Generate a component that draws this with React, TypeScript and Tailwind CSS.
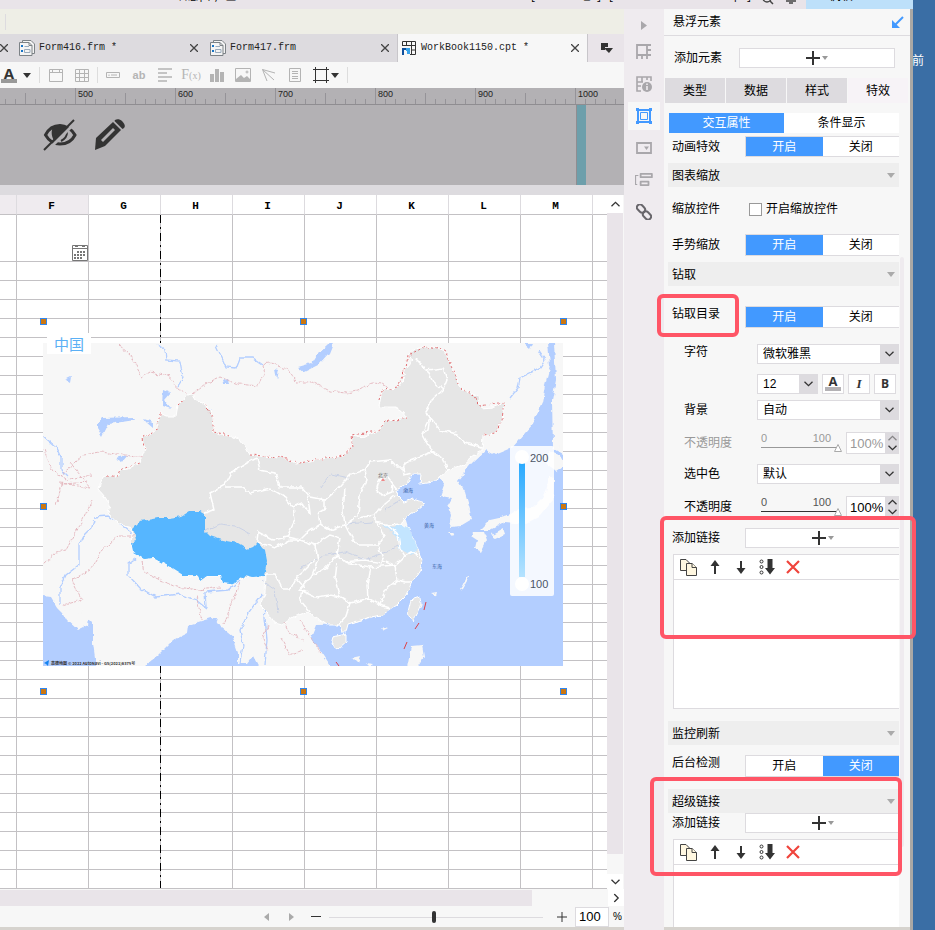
import { useId, type ReactNode } from 'react';
import clsx from 'clsx';

const columns = ['', 'F', 'G', 'H', 'I', 'J', 'K', 'L', 'M', ''];
const rows = Array.from({ length: 34 }, (_, i) => i);

const chinaOutline =
  'M99 490L100 484L103 477L107 476L117 476L120 470L128 469L140 462L142 457L145 450L143 436L152 433L157 430L160 413L166 416L176 416L178 405L184 399L187 395L192 394L195 399L203 404L210 409L213 418L213 432L220 434L230 435L240 440L246 448L250 455L258 456L280 457L296 463L310 462L326 458L343 456L353 447L351 435L363 437L378 431L385 422L393 420L407 418L403 412L395 407L379 407L382 390L397 388L402 382L406 368L413 360L408 355L415 349L425 347L433 347L445 352L450 363L457 380L460 389L470 392L478 398L482 408L492 407L504 402L502 420L495 433L483 435L482 450L472 457L463 465L448 470L440 477L433 482L420 484L421 474L413 474L408 482L395 490L397 495L404 502L413 499L425 503L417 510L405 518L402 524L408 528L415 542L418 550L422 560L420 572L412 582L405 597L397 605L382 615L367 618L348 624L346 632L342 632L340 625L327 625L317 618L307 612L293 617L282 625L275 623L268 613L260 605L265 593L266 575L264 576L247 576L238 580L230 584L222 583L220 576L207 576L190 576L170 567L153 558L145 559L133 552L131 543L133 528L125 526L117 523L108 513L110 505L105 497Z';

const tibet =
  'M133 528L140 521L147 520L158 518L169 518L182 516L190 511L200 511L205 514L205 531L210 536L222 540L238 543L248 549L253 547L258 542L265 550L267 561L264 576L253 577L245 575L238 580L230 584L222 583L220 576L207 576L200 581L197 575L183 575L170 567L153 558L145 559L133 552L131 543L136 541Z';

const eastSea =
  'M548 343L550 365L545 385L542 402L532 425L512 448L495 455L486 450L472 463L458 481L465 492L470 510L472 520L462 526L450 527L452 515L448 505L452 498L441 496L445 485L440 478L420 484L421 474L413 474L408 482L395 490L397 495L404 502L425 503L417 510L405 518L408 528L418 550L422 560L420 572L412 582L405 597L382 615L348 624L317 625L311 640L320 650L332 672H570V458L553 448L552 400L556 380L554 343Z';

const provinces = [
  'M257 458L247 463L232 472L225 485L210 493L214 510L205 513',
  'M225 487L243 487L250 493L270 488L285 497L293 507L295 520L287 537L273 540L258 532L257 542',
  'M257 458L260 470L275 473L280 487L302 487L310 497L325 500L337 490L343 483L352 474L365 470L370 462L390 460L396 467L403 467L410 460L432 452L422 433L430 417L425 412L432 400L443 390L433 382L427 370L415 358',
  'M430 417L440 430L457 434L465 443L482 448M422 433L428 430L430 417M432 452L443 458L448 470',
  'M427 370L443 368L447 380L443 390',
  'M293 507L302 503L310 513L308 497M325 500L325 508L318 512L320 524L330 530L345 525',
  'M365 470L367 480L360 495L358 515L345 525L343 510L345 488',
  'M358 518L375 515L385 503L395 495M375 515L375 522L390 525L402 524',
  'M378 480L388 477L393 484L392 492L382 496L376 488ZM393 484L398 490',
  'M403 467L404 475L412 473M345 525L352 538L358 545L378 545L384 536L376 522',
  'M386 525L398 535L400 548L405 556L395 565L383 560L378 545',
  'M405 556L412 552L418 556M300 540L315 545L330 535L340 538L337 555L345 562L365 560L383 563',
  'M337 555L325 568L312 575L300 590L315 597L330 595L340 597L335 580L337 562',
  'M340 597L350 603L362 600L368 598L367 585L370 567L345 562',
  'M368 598L380 605L385 590L397 580L395 565L370 567M397 580L405 582L412 582',
  'M380 605L390 608M350 603L346 616L338 625M302 590L300 600L310 612',
  'M258 542L275 548L290 540L300 540M266 575L275 575L283 590L290 590L296 578L305 588M315 545L318 560L312 575',
  'M287 537L300 540L310 530L320 524M315 560L303 572L296 578',
];

const rivers = [
  'M43 436L56 447L61 458L61 470L68 477',
  'M157 344L165 350L166 360L180 361L183 378L178 386',
  'M216 345L222 358L226 367L236 368L240 358L253 358L262 364',
  'M94 520L92 527L84 535L79 545L79 565L66 575L60 588L60 605',
  'M94 517L108 516L120 524L134 535',
  'M136 558L128 564L128 575L140 588L156 597L180 594L196 600L206 608M206 592L228 590L240 580M205 592L206 607',
  'M262 594L249 612L240 630L243 645L240 663M264 606L267 640L265 665',
  'M178 405L190 410L205 416L210 408',
  'M510 398L518 388L520 378L540 368L545 360L538 350',
];

const redBorders = [
  'M118 344L130 355L142 377L150 372L168 376L178 388L187 394M192 394L205 384L220 377L238 384L258 386L264 374L262 366L268 362L288 370L296 382L312 382L330 391L345 393L358 391L372 383L382 384L392 390',
  'M60 476L84 455L100 452L125 455L142 458M44 450L52 470L66 480L92 474M60 483L90 488L70 462M56 505L62 484L88 482',
  'M92 500L82 522L76 532L66 550L56 552L43 564M134 536L118 536L100 552L90 570L72 580L82 600L62 606',
  'M142 562L144 572L160 580L176 587L200 590L220 587M240 582L232 602L224 625M196 596L202 620',
  'M268 625L262 638L268 650M284 622L290 634L304 640M281 638L290 655L303 650M300 620L306 630L322 655',
];

const brightBorders = [
  'M107 476L117 476L120 470L140 462M144 450L143 436L157 430L160 413M178 405L184 399M205 404L213 418V432L230 435M250 455L280 457L300 463L326 458L343 456L353 447L351 435L378 431L385 422L407 418M379 400L382 390L397 388L406 368L408 355L425 347L445 350L450 363L458 384M460 389L470 392L480 406L504 402L502 420L495 433L483 435',
];

function Icon({ size = 16, className, children }: { size?: number; className?: string; children: ReactNode }) {
  return (
    <svg width={size} height={size} viewBox="0 0 16 16" fill="none" stroke="currentColor" className={clsx('shrink-0', className)}>
      {children}
    </svg>
  );
}

function Caret({ className }: { className?: string }) {
  return (
    <svg width="8" height="5" viewBox="0 0 8 5" fill="currentColor" className={clsx('shrink-0', className)}>
      <path d="M0 0H8L4 5Z" />
    </svg>
  );
}

function Chevron({ className }: { className?: string }) {
  return (
    <svg width="9" height="6" viewBox="0 0 9 6" fill="none" stroke="#333" strokeWidth="1.3" className={clsx('shrink-0', className)}>
      <path d="M.5 .7L4.500 4.700L8.500 .7" />
    </svg>
  );
}

function CloseIcon() {
  return (
    <svg width="8" height="8" viewBox="0 0 8 8" stroke="#444" strokeWidth="1.3">
      <path d="M0 0L8 8M8 0L0 8" />
    </svg>
  );
}

function FormIcon() {
  return (
    <Icon>
      <path d="M3.500 2.500V.5H12L15.500 4V13.500H13" fill="#f4f4f4" stroke="#7c8286" />
      <path d="M.5 2.500H10L13 5.500V15.500H.5Z" fill="#f4f4f4" stroke="#7c8286" />
      <path d="M2 5H4V7H2ZM2 10H4V12H2Z" fill="#1673c4" stroke="none" />
      <path d="M5.500 6.500H10M5.500 9.500H11V12.500H5.500Z" stroke="#9ab" />
      <path d="M10 2.500V5.500H13" stroke="#7c8286" />
    </Icon>
  );
}

function BookIcon() {
  return (
    <Icon>
      <path d="M1.500 6V1.500H14.500V14.500H9M1.500 5.500H14.500M5.500 1.500V6M10.500 1.500V14.500M10.500 10H14.500" stroke="#333" />
      <path d="M1 8H5V10H3V15H1Z" fill="#0f4f9c" stroke="none" />
      <path d="M5 8H9V14H6V11H5Z" fill="#38a3ea" stroke="none" />
    </Icon>
  );
}

function Toggle({ label, active = 0 }: { label: string; active?: number }) {
  return (
    <div role="group" aria-label={label} className="flex h-full flex-1 border border-r-0 border-[#dddbdf] bg-white">
      {['开启', '关闭'].map((text, i) => (
        <button key={text} aria-pressed={i === active} className={clsx('flex flex-1 items-center justify-center', i === active && 'bg-[#4299ff] text-white')}>
          {text}
        </button>
      ))}
    </div>
  );
}

function SettingRow({ label, children, className, indent, top }: { label: string; children: ReactNode; className?: string; indent?: boolean; top?: boolean }) {
  return (
    <div className={clsx('flex pr-px', top ? 'items-start' : 'items-center', className)}>
      <span className={clsx('shrink-0 leading-4', indent ? 'w-[93px] pl-5' : 'w-[81px] pl-2')}>{label}</span>
      {children}
    </div>
  );
}

function SectionHeader({ title, className }: { title: string; className?: string }) {
  return (
    <button className={clsx('ml-1 mr-px flex h-6 items-center justify-between bg-[#eeeeee] px-1 pt-px', className)}>
      {title}
      <Caret className="text-[#aaa]" />
    </button>
  );
}

function SelectBox({ label, value, className }: { label: string; value: string; className?: string }) {
  return (
    <div className={clsx('relative h-5 border border-[#dddbdf] bg-white', className)}>
      <select aria-label={label} className="block h-full w-full appearance-none pl-[5px] outline-none">
        <option>{value}</option>
      </select>
      <span className="pointer-events-none absolute inset-y-0 right-0 flex w-[18px] items-center justify-center bg-[#dddbdf]">
        <Chevron />
      </span>
    </div>
  );
}

function Opacity({ disabled, className }: { disabled?: boolean; className?: string }) {
  const id = useId();
  return (
    <SettingRow label="不透明度" indent className={clsx('h-[22px]', disabled && 'text-[#999]', className)}>
      <div className={clsx('relative h-[22px] w-[89px] pl-1', disabled ? 'text-[#999]' : 'text-[#555]')}>
        <label htmlFor={id} className="flex w-[70px] justify-between text-[11px] leading-3">
          <span>0</span>
          <span>100</span>
        </label>
        <svg width="84" height="10" viewBox="0 0 84 10" className="-mt-px">
          <path d="M0 4.500H75" stroke={disabled ? '#999' : '#333'} />
          <path d="M77 1.500L80.500 8.500H73.500Z" fill="#fff" stroke="#aaa" />
        </svg>
        <input id={id} type="range" defaultValue={100} disabled={disabled} className="absolute inset-0 w-full opacity-0" />
      </div>
      <input aria-label="不透明度" defaultValue="100%" disabled={disabled} className="h-[22px] w-10 border border-[#dddbdf] bg-white pl-[3px] text-[13px] outline-none" />
      <div className="flex h-[22px] w-[13px] flex-col items-center justify-between bg-[#dddbdf] py-[3px]">
        <Chevron className={clsx('rotate-180', disabled && 'opacity-50')} />
        <Chevron />
      </div>
    </SettingRow>
  );
}

function AddButton({ label, className }: { label: string; className?: string }) {
  return (
    <button aria-label={label} className={clsx('flex h-5 flex-1 items-center justify-center gap-[2px] border border-[#dddbdf] bg-white', className)}>
      <svg width="14" height="14" viewBox="0 0 14 14" stroke="#333" strokeWidth="2">
        <path d="M7 0V14M0 7H14" />
      </svg>
      <svg width="6" height="4" viewBox="0 0 6 4" fill="#999">
        <path d="M0 0H6L3 4Z" />
      </svg>
    </button>
  );
}

function LinkList({ className }: { className?: string }) {
  return (
    <div className={clsx('ml-[9px] mr-px border border-r-0 border-[#dddbdf] bg-white', className)}>
      <div className="flex h-[25px] items-center gap-[10px] border-b border-[#dddbdf] pl-[6px] text-[#333]">
        <button aria-label="复制">
          <svg width="17" height="17" viewBox="0 0 17 17" fill="#fff7e0" stroke="#444">
            <path d="M.5 .5H6L9.500 4V11.500H.5Z" />
            <path d="M6.500 4.500H12L16.500 8.500V16.500H6.500Z" />
            <path d="M12 4.500V8.500H16.500" />
          </svg>
        </button>
        <button aria-label="上移">
          <Icon>
            <path d="M8 15V5" strokeWidth="2" />
            <path d="M8 1L12.500 7H3.500Z" fill="currentColor" stroke="none" />
          </Icon>
        </button>
        <button aria-label="下移">
          <Icon>
            <path d="M8 2V12" strokeWidth="2" />
            <path d="M8 15L12.500 9H3.500Z" fill="currentColor" stroke="none" />
          </Icon>
        </button>
        <button aria-label="排序">
          <Icon>
            <circle cx="2.500" cy="2.500" r="1.500" />
            <circle cx="2.500" cy="8" r="1.500" />
            <circle cx="2.500" cy="13.500" r="1.500" />
            <path d="M8.500 0H13.500V9H16L11 15.500L6 9H8.500Z" fill="currentColor" stroke="none" />
          </Icon>
        </button>
        <button aria-label="删除">
          <Icon className="text-[#f0443c]">
            <path d="M2 2L14 14M14 2L2 14" strokeWidth="2.200" />
          </Icon>
        </button>
      </div>
    </div>
  );
}

function ChinaMap() {
  return (
    <svg viewBox="43 343 520 323" className="block h-full w-full" preserveAspectRatio="none">
      <defs>
        <filter id="coast" filterUnits="userSpaceOnUse" x="38" y="338" width="530" height="333">
          <feTurbulence type="fractalNoise" baseFrequency="0.15" numOctaves="2" seed="4" />
          <feDisplacementMap in="SourceGraphic" scale="5" xChannelSelector="R" yChannelSelector="G" />
        </filter>
        <linearGradient id="heat" x1="0" y1="0" x2="0" y2="1">
          <stop offset="0" stopColor="#29aaff" />
          <stop offset="1" stopColor="#b5e3ff" />
        </linearGradient>
      </defs>
      <rect x="43" y="343" width="520" height="323" fill="#f7f7f7" />
      <g filter="url(#coast)">
        <g fill="#b3ceff">
          <path d={eastSea} />
          <path d="M36 595L51 597L57 607L63 613L67 620L78 630L88 625L89 618L93 622L93 643L97 672H36Z" />
          <path d="M138 672L158 655L173 640L187 633L188 625L215 617L222 628L233 637L238 652V663H247L253 655L262 672Z" />
          <path d="M97 425L103 418L133 417L135 420L108 424L102 436L97 428ZM115 458L128 455L122 462ZM144 419L153 422V428L146 422ZM65 380L71 377L70 383ZM222 381L228 379L229 384L223 384ZM275 369L279 370L277 380ZM163 390L170 393L164 400L171 408L162 405Z" />
          <path d="M298 367L312 363L318 353L327 345L333 343L329 353L318 365L304 372ZM523 343H533L530 349Z" />
        </g>
        <path d="M300 620L310 638L320 650L335 672H270V620Z" fill="#f7f7f7" />
        <g fill="#f7f7f7">
          <path d="M62 611L80 607L84 612L72 616ZM558 343H570V370L560 372ZM558 420L570 405V460L558 445Z" />
          <path d="M473 532L484 532L487 540L481 552L475 548L477 540L471 536ZM480 530L490 520L508 516L520 508L533 507L545 495L550 475L554 478L553 500L540 516L525 524L505 522L490 530ZM492 534L503 528L505 534L494 539ZM549 450L560 455L566 465L556 472L546 464Z" />
          <path d="M411 646L422 645L424 657L417 668L407 668ZM381 627L388 629L384 631ZM352 658L361 656L358 664ZM366 663L374 664L370 667ZM431 593L437 592L436 596ZM449 533L454 533L452 536ZM459 590L463 585L466 579L471 574L467 581L463 588Z" />
        </g>
        <g fill="none" stroke="#b3ceff" strokeWidth="1.300">
          {rivers.map((d) => <path key={d} d={d} />)}
        </g>
        <path d={chinaOutline} fill="#e6e6e6" stroke="#fff" strokeWidth="1" />
        <path d="M420 597L421 604L413 622L408 613L411 600ZM333 637L346 634L346 642L338 649L331 644Z" fill="#e6e6e6" stroke="#fff" />
        <path d={tibet} fill="#57b6ff" />
        <path d="M383 525L393 527L402 524L408 528L415 542L418 550L411 555L398 548L400 542L392 532Z" fill="#c3e5ff" />
        <g fill="none" stroke="#c3cde6" strokeWidth="0.800">
          <path d="M205 531L220 524L235 526L250 534M320 488L330 474L350 478M300 568L325 555L345 552L365 560L385 553L400 545M345 524L372 522M385 510L400 500M262 580L275 590L278 612" />
        </g>
        <g fill="none" stroke="#fff" strokeWidth="1.500">
          {provinces.map((d) => <path key={d} d={d} />)}
        </g>
        <g fill="none" stroke="#e3b3bb" strokeWidth="0.900" strokeDasharray="3 1">
          {redBorders.map((d) => <path key={d} d={d} />)}
        </g>
        <g fill="none" stroke="#dc5b60" strokeWidth="0.900" strokeDasharray="2 2.500">
          {brightBorders.map((d) => <path key={d} d={d} />)}
        </g>
      </g>
      <path d="M426 602L424 610M419 623L415 629M407 642L404 649M336 662L339 666" stroke="#dd4248" fill="none" />
      <path d="M383 478L385 481H381Z" fill="#e88" />
      <g fontFamily="'Noto Sans CJK SC', sans-serif" fontSize="5" fill="#31599f">
        <text x="378" y="477" fill="#666">北京</text>
        <text x="403" y="492">渤海</text>
        <text x="424" y="527">黄海</text>
        <text x="432" y="568">东海</text>
      </g>
      <rect x="510" y="446" width="44" height="150" rx="2" fill="#fff" fillOpacity="0.860" />
      <rect x="519" y="463" width="6" height="114" fill="url(#heat)" />
      <circle cx="522" cy="457" r="7" fill="#fff" />
      <circle cx="522" cy="584" r="7" fill="#fff" />
      <g fontFamily="'Liberation Sans', sans-serif" fontSize="11" fill="#4c5566">
        <text x="530" y="462">200</text>
        <text x="530" y="588">100</text>
      </g>
      <path d="M44 663L49 660L48 666L46 664Z" fill="#1683f0" />
      <text x="51" y="665" fontFamily="'Noto Sans CJK SC', sans-serif" fontSize="4" fontWeight="700" fill="#333">高德地图 © 2022 AutoNavi - GS(2021)6375号</text>
    </svg>
  );
}

function DocTab({ icon, title, active }: { icon: ReactNode; title: string; active?: boolean }) {
  return (
    <div className={clsx('flex w-[191px] shrink-0 items-center gap-1', active ? 'border-x border-[#c8c6ca] bg-[#f7f7f7] pl-[3px]' : 'pl-1')}>
      {icon}
      <button className="flex-1 text-left font-['Liberation_Mono'] text-[10px] text-[#222]">{title}</button>
      <button aria-label="关闭标签" className="mr-2"><CloseIcon /></button>
    </div>
  );
}

function ToolButton({ label, children }: { label: string; children: ReactNode }) {
  return (
    <button aria-label={label} className="flex w-[26px] shrink-0 items-center justify-center">{children}</button>
  );
}

function Editor() {
  return (
    <main className="flex min-w-0 flex-1 flex-col overflow-hidden bg-[#f7f7f7]">
      <div className="flex h-[25px] shrink-0 items-center bg-[#eeeee6] pl-[5px]"><span className="h-4 w-px bg-[#dddbdf]" /></div>
      <div className="flex h-7 shrink-0 bg-[#dddbdf]">
        <button aria-label="关闭标签" className="w-[15px] shrink-0 pr-2"><CloseIcon /></button>
        <DocTab icon={<FormIcon />} title="Form416.frm *" />
        <DocTab icon={<FormIcon />} title="Form417.frm" />
        <DocTab icon={<BookIcon />} title="WorkBook1150.cpt *" active />
        <button aria-label="标签列表" className="flex flex-1 items-center bg-[#e9e4e9] pl-3">
          <svg width="14" height="12" viewBox="0 0 14 12" fill="#333"><path d="M1 1H8V5H5V8H1ZM4 6H13L9 11Z" /></svg>
        </button>
      </div>
      <div className="flex h-[26px] shrink-0 items-stretch text-[#b4b4b4]">
        <button aria-label="字体颜色" className="flex w-[39px] items-center gap-[6px] pl-px text-[#333]">
          <span className="w-4 border-b-4 border-[#999] text-center font-['Open_Sans'] text-[15px] font-bold leading-3">A</span>
          <Caret />
        </button>
        <span className="my-[5px] mr-[3px] w-px bg-[#ddd]" />
        <ToolButton label="标题"><Icon><path d="M1.500 2.500H14.500V14.500H1.500ZM1.500 5.500H14.500M4.500 2.500V5.500M11.500 2.500V5.500" /></Icon></ToolButton>
        <ToolButton label="表格"><Icon><path d="M1.500 2.500H14.500V14.500H1.500ZM1.500 6.500H14.500M1.500 10.500H14.500M5.500 2.500V14.500M10.500 2.500V14.500" /></Icon></ToolButton>
        <span className="my-[5px] mx-[2px] w-px bg-[#ddd]" />
        <ToolButton label="控件"><Icon><path d="M1.500 5.500H14.500V10.500H1.500ZM4 7.500V9M6 8H12" /></Icon></ToolButton>
        <ToolButton label="文本"><span className="text-[11px] font-bold">ab</span></ToolButton>
        <ToolButton label="富文本"><Icon><path d="M1 2H15M1 6H10M1 10H15M1 14H10" strokeWidth="1.600" /></Icon></ToolButton>
        <ToolButton label="公式"><span className="whitespace-nowrap font-['Liberation_Serif'] text-sm">F<span className="text-[10px]">(x)</span></span></ToolButton>
        <ToolButton label="图表"><Icon><path d="M1 7H5V15H1ZM6 2H10V15H6ZM11 5H15V15H11Z" fill="currentColor" stroke="none" /></Icon></ToolButton>
        <ToolButton label="图片"><Icon><path d="M.5 1.500H15.500V14.500H.5Z" /><path d="M1 12L6 8L9 11L12 9L15 12V14H1Z" fill="currentColor" stroke="none" /><circle cx="12" cy="5" r="1" /></Icon></ToolButton>
        <ToolButton label="斜线"><Icon><path d="M1.500 2.500L14 6M1.500 2.500L13 13M1.500 2.500L6 14" /></Icon></ToolButton>
        <ToolButton label="子报表"><Icon><path d="M2.500 1.500H13.500V14.500H2.500ZM5 4.500H11M5 6.500H11M5 9.500H11M5 11.500H11" /></Icon></ToolButton>
        <button aria-label="悬浮元素" className="flex w-[39px] items-center gap-[2px] pl-[5px] text-[#333]">
          <Icon><path d="M2.500 0V16M13.500 0V16M0 2.500H16M0 13.500H16" /></Icon>
          <Caret />
        </button>
        <span className="my-[5px] w-px bg-[#ddd]" />
      </div>

      <div className="relative flex h-[17px] shrink-0 overflow-hidden border-b border-[#8f8d91] bg-[#b3b1b4] pl-[76px]">
        <svg width="100%" height="17" className="absolute left-0 top-0">
          <defs>
            <pattern id="ticks" x="75" width="100" height="17" patternUnits="userSpaceOnUse">
              <path d="M.5 0V16M50.500 5V16M10.500 11V16M20.500 11V16M30.500 11V16M40.500 11V16M60.500 11V16M70.500 11V16M80.500 11V16M90.500 11V16" stroke="#959398" />
            </pattern>
          </defs>
          <rect width="100%" height="17" fill="url(#ticks)" />
        </svg>
        {[500, 600, 700, 800, 900, 1000].map((n) => (
          <span key={n} className="w-[100px] shrink-0 pl-[2px] text-[9px] leading-[13px] text-[#222]">{n}</span>
        ))}
      </div>
      <div className="flex h-20 shrink-0 bg-[#b3b1b4]">
        <div className="flex w-[577px] gap-[18px] border-r border-[#8f8d91] pl-[43px] pt-[14px]">
          <button aria-label="隐藏" className="h-8 w-8">
            <svg width="34" height="32" viewBox="0 0 34 32" fill="none" stroke="#333" strokeWidth="3">
              <path d="M2.500 16C6 9 12 6.500 17 6.500S29 10 32 16C29 22 23 25 17 25S6 22 2.500 16Z" />
              <path d="M10 8C8 12 8 18 12 23L26 9C21 5 14 5 10 8Z" fill="#333" stroke="none" />
              <path d="M18 22C22 20 24 17 24 13" strokeWidth="2" />
              <path d="M5 31L33 3" stroke="#b3b1b4" strokeWidth="3" />
              <path d="M1 31L31 1" strokeWidth="2" />
            </svg>
          </button>
          <button aria-label="编辑" className="h-8 w-8">
            <svg width="34" height="32" viewBox="0 0 34 32">
              <path d="M3 19L20 3L28 11L12 27L2 31Z" fill="#333" />
              <path d="M22 1C24-.5 27 0 29 2S33 7 31 9L29.500 10L21.500 2Z" fill="#333" />
              <path d="M8 21L20 9L22 11L10 23Z" fill="#b3b1b4" />
            </svg>
          </button>
        </div>
        <div className="w-[9px] bg-[#6d9fab]" />
      </div>
      <div className="h-[10px] shrink-0 bg-[#dddbdf]" />

      <div className="flex min-h-0 flex-1">
        <div className="relative min-w-0 flex-1 overflow-hidden bg-white">
          <table className="w-full table-fixed border-separate border-spacing-0 font-['Liberation_Mono'] text-[11px]">
            <colgroup>
              <col className="w-[17px]" />
              {columns.slice(1, 9).map((c) => <col key={c} className="w-[72px]" />)}
              <col />
            </colgroup>
            <thead>
              <tr className="h-5">
                {columns.map((c, i) => (
                  <th key={i} scope="col" className={clsx('border-b border-r border-b-[#c3c1c4] border-r-[#dddbdf] p-0 pr-[2px] pt-[2px] font-bold leading-4', i < 2 && 'bg-[#efebef]', i === 9 && 'border-r-0')}>{c}</th>
                ))}
              </tr>
            </thead>
            <tbody>
              {rows.map((r) => (
                <tr key={r} className={r === 0 ? 'h-[47px]' : 'h-[19px]'}>
                  {columns.map((_, i) => (
                    <td key={i} className={clsx('border-b border-r border-[#c3c1c4] p-0', i === 9 && 'border-r-0')} />
                  ))}
                </tr>
              ))}
            </tbody>
          </table>
          <svg width="1" height="673" className="absolute left-[160px] top-5">
            <path d="M.5 0V673" stroke="#000" strokeDasharray="8 4 2 4" />
          </svg>
          <svg width="16" height="16" viewBox="0 0 16 16" className="absolute left-[72px] top-[50px]">
            <path d="M.5 .5H15.500V15.500H.5ZM.5 3.500H15.500" fill="#fff" stroke="#777" />
            <path d="M5 6H7V8H5ZM8 6H10V8H8ZM11 6H13V8H11ZM2 9H4V11H2ZM5 9H7V11H5ZM8 9H10V11H8ZM11 9H13V11H11ZM2 12H4V14H2ZM5 12H7V14H5ZM8 12H10V14H8ZM3 1H6V2H3ZM10 1H13V2H10Z" fill="#777" />
          </svg>
          <div className="absolute left-[43px] top-[148px] h-[323px] w-[520px]">
            <ChinaMap />
            <button className="absolute -top-[10px] left-1 h-[21px] w-[44px] bg-white font-['Noto_Sans_CJK_SC'] text-[15px] leading-5 text-[#5bb0f5]">中国</button>
          </div>
          <div className="pointer-events-none absolute left-10 top-[123px] grid h-[377px] w-[527px] grid-cols-3 grid-rows-3">
            {['place-self-start', 'justify-self-center self-start', 'justify-self-end self-start', 'justify-self-start self-center', 'col-start-3 justify-self-end self-center', 'justify-self-start self-end', 'justify-self-center self-end', 'place-self-end'].map((place) => (
              <span key={place} className={clsx('h-[7px] w-[7px] border border-[#2f86f0] bg-[#cc7711]', place)} />
            ))}
          </div>
        </div>
        <div className="flex w-[17px] shrink-0 flex-col border-r border-[#f7f7f7]">
          <button aria-label="向上滚动" className="flex h-[18px] items-center justify-center bg-white"><Chevron className="rotate-180" /></button>
          <div className="flex-1 bg-[#e9e4e9]" />
          <button aria-label="向下滚动" className="mt-5 flex h-[15px] items-center justify-center bg-white"><Chevron /></button>
        </div>
      </div>
      <div className="flex h-[17px] shrink-0">
        <div className="mr-[76px] mt-px flex-1 bg-[#e9e4e9]" />
        <button aria-label="向右滚动" className="flex w-4 items-center justify-center bg-white"><Chevron className="-rotate-90" /></button>
      </div>
      <div className="flex h-6 shrink-0 items-center justify-end border-b-3 border-[#d6d3ce] text-[13px]">
        <button aria-label="上一页" className="mr-5"><svg width="5" height="8" viewBox="0 0 5 8" fill="#aaa"><path d="M5 0V8L0 4Z" /></svg></button>
        <button aria-label="下一页" className="mr-[17px]"><svg width="5" height="8" viewBox="0 0 5 8" fill="#aaa"><path d="M0 0V8L5 4Z" /></svg></button>
        <button aria-label="缩小" className="flex h-4 w-[10px] items-center"><span className="h-px w-full bg-[#333]" /></button>
        <div className="relative ml-2 mr-[14px] flex h-4 w-[214px] items-center justify-center">
          <span className="absolute inset-x-0 top-2 h-px bg-[#dddbdf]" />
          <span className="relative mr-1 h-3 w-1 rounded-sm bg-[#333]" />
          <input type="range" aria-label="缩放比例" className="absolute inset-0 w-full opacity-0" />
        </div>
        <button aria-label="放大"><svg width="10" height="10" viewBox="0 0 10 10" stroke="#333"><path d="M5 0V10M0 5H10" /></svg></button>
        <input aria-label="缩放" defaultValue="100" className="ml-2 h-5 w-[34px] border border-[#dddbdf] bg-white pl-[3px] outline-none" />
        <span className="w-[15px] pl-1 text-[10px]">%</span>
      </div>
    </main>
  );
}

function SideBar() {
  return (
    <nav className="flex w-10 shrink-0 flex-col items-center bg-[#efebef] text-[#a9a7ab]">
      <button aria-label="收起" className="flex h-[27px] w-8 items-center justify-center pt-[6px]">
        <svg width="6" height="9" viewBox="0 0 6 9" fill="currentColor"><path d="M0 0V9L6 4.500Z" /></svg>
      </button>
      <button aria-label="单元格元素" className="flex h-8 w-8 items-center justify-center">
        <Icon><path d="M1 15V1H11V11H1M6 11V15M11 1H15M11 6H15M11 11H15M11 11V15" strokeWidth="1.800" /></Icon>
      </button>
      <button aria-label="单元格属性" className="flex h-8 w-8 items-center justify-center">
        <Icon><path d="M5 15H1V1H15V5M1 6H7M6 1V6M11 1V4M1 10H5" strokeWidth="1.600" /><circle cx="11" cy="11" r="5" fill="currentColor" stroke="none" /><path d="M11 7.500V9M11 10V14" stroke="#efebef" strokeWidth="1.600" /></Icon>
      </button>
      <button aria-label="悬浮元素" className="flex h-8 w-8 items-center justify-center border-y-2 border-[#efebef] bg-[#f7f7f7] text-[#4299ff]">
        <Icon><path d="M2 2H14V14H2Z" strokeWidth="2" /><path d="M4.500 4.500H11.500V11.500H4.500Z" /><path d="M0 0H3V3H0ZM13 0H16V3H13ZM0 13H3V16H0ZM13 13H16V16H13Z" fill="currentColor" stroke="none" /></Icon>
      </button>
      <button aria-label="控件设置" className="flex h-8 w-8 items-center justify-center">
        <Icon><path d="M1 3H15V13H1Z" strokeWidth="1.800" /><path d="M8 6.500H13L10.500 10Z" fill="currentColor" stroke="none" /></Icon>
      </button>
      <button aria-label="条件属性" className="flex h-8 w-8 items-center justify-center">
        <Icon size={18}><path d="M3 4H.5V12H2" /><path d="M5 2.500H15V5.500H5ZM5 9.500H12V12.500H5Z" strokeWidth="1.600" strokeLinejoin="round" /></Icon>
      </button>
      <button aria-label="超级链接" className="flex h-8 w-8 items-center justify-center text-[#68666b]">
        <Icon><rect x="2" y="0" width="6" height="9" rx="3" strokeWidth="2" transform="rotate(-45 5 4.500)" /><rect x="8" y="7" width="6" height="9" rx="3" strokeWidth="2" transform="rotate(-45 11 11.500)" /></Icon>
      </button>
    </nav>
  );
}

function PropertyPanel() {
  return (
    <aside className="relative flex w-[249px] shrink-0 flex-col border-r-3 border-[#aaa8a5] bg-[#f7f7f7]">
      <div className="flex h-[27px] shrink-0 items-center justify-between border-b border-[#dddbdf] pl-[9px] pr-[6px]">
        <h2>悬浮元素</h2>
        <button aria-label="弹出" className="text-[#4299ff]">
          <svg width="12" height="12" viewBox="0 0 12 12" fill="none" stroke="currentColor" strokeWidth="2"><path d="M11 1L3 9" /><path d="M0 4V12H8Z" fill="currentColor" stroke="none" /></svg>
        </button>
      </div>
      <div className="mt-3 flex h-5 shrink-0 items-center pl-[10px] pr-[15px]">
        <span className="w-[65px] shrink-0">添加元素</span>
        <AddButton label="添加元素" />
      </div>
      <div role="tablist" className="mt-[10px] flex h-[25px] shrink-0 gap-px px-px">
        {['类型', '数据', '样式', '特效'].map((t, i) => (
          <button key={t} role="tab" aria-selected={i === 3} className={clsx('w-[60px]', i === 3 ? 'bg-[#f7f3f7]' : 'bg-[#dddbdf]')}>{t}</button>
        ))}
      </div>
      <div className="mt-[10px] flex h-5 shrink-0 px-[5px]">
        <button className="w-[115px] bg-[#4299ff] text-white">交互属性</button>
        <button className="w-[115px] bg-white">条件显示</button>
      </div>

      <div className="flex min-h-0 flex-1 overflow-hidden">
        <div className="flex min-w-0 flex-1 flex-col [&>*]:shrink-0">
          <SettingRow label="动画特效" className="mt-[3px] h-[21px]"><Toggle label="动画特效" /></SettingRow>
          <SectionHeader title="图表缩放" className="mt-[6px]" />
          <SettingRow label="缩放控件" className="mt-3 h-5">
            <label className="flex items-center gap-1 pl-1">
              <input type="checkbox" className="h-[13px] w-[13px] appearance-none border border-[#999] bg-white" />
              开启缩放控件
            </label>
          </SettingRow>
          <SettingRow label="手势缩放" className="mt-[15px] h-[22px]"><Toggle label="手势缩放" /></SettingRow>
          <SectionHeader title="钻取" className="mt-[6px]" />
          <SettingRow label="钻取目录" top className="mt-5 h-[22px]"><Toggle label="钻取目录" /></SettingRow>
          <SettingRow label="字符" indent top className="mt-4 h-5"><SelectBox label="字体" value="微软雅黑" className="w-[142px]" /></SettingRow>
          <div className="mt-[10px] flex h-5 gap-1 pl-[93px]">
            <SelectBox label="字号" value="12" className="w-[61px]" />
            <button aria-label="字体颜色" className="flex w-[22px] flex-col items-center border border-[#dddbdf] bg-white text-[#333]">
              <span className="w-4 border-b-4 border-[#b3b1b4] font-['Open_Sans'] text-[13px] font-bold leading-3">A</span>
            </button>
            <button aria-label="斜体" className="w-[22px] border border-[#dddbdf] bg-white font-['Liberation_Serif'] text-[13px] font-bold italic leading-4 text-[#333]">I</button>
            <button aria-label="加粗" className="w-[22px] border border-[#dddbdf] bg-white font-['Open_Sans'] font-bold leading-4 text-[#333]">B</button>
          </div>
          <SettingRow label="背景" indent className="mt-[6px] h-5"><SelectBox label="背景" value="自动" className="w-[142px]" /></SettingRow>
          <Opacity disabled className="mt-3" />
          <SettingRow label="选中色" indent className="mt-[10px] h-5"><SelectBox label="选中色" value="默认" className="w-[142px]" /></SettingRow>
          <Opacity className="mt-3" />
          <SettingRow label="添加链接" className="mt-[10px] h-5"><AddButton label="添加链接" className="border-r-0" /></SettingRow>
          <LinkList className="mt-[6px] h-[155px]" />
          <SectionHeader title="监控刷新" className="mt-3" />
          <SettingRow label="后台检测" top className="mt-[10px] h-[22px]"><Toggle label="后台检测" active={1} /></SettingRow>
          <SectionHeader title="超级链接" className="mt-3" />
          <SettingRow label="添加链接" className="h-5"><AddButton label="添加超级链接" className="border-r-0" /></SettingRow>
          <LinkList className="mt-[6px] h-[100px]" />
        </div>
        <div className="mb-20 mr-[6px] mt-[124px] w-1 shrink-0 rounded-sm bg-[#efebef]" />
      </div>
      <div className="h-[3px] shrink-0 bg-[#d6d3ce]" />

      <div className="pointer-events-none absolute -left-[7px] top-[285px] h-[43px] w-[82px] rounded-md border-4 border-[#ff5566]" />
      <div className="pointer-events-none absolute -left-[4px] top-[507px] h-[123px] w-[256px] rounded-md border-4 border-[#ff5566]" />
      <div className="pointer-events-none absolute -left-[14px] top-[768px] h-[99px] w-[252px] rounded-md border-4 border-[#ff5566]" />
    </aside>
  );
}

export default function App() {
  return (
    <div className="flex h-screen overflow-hidden bg-[#3a6ea5] font-['Liberation_Sans','Noto_Sans_CJK_SC',sans-serif] text-xs text-black">
      <div className="flex min-w-0 flex-1 flex-col">
        <header className="flex h-[9px] shrink-0 items-start justify-end overflow-hidden bg-[#e9e4e9]">
          <span className="-mt-2 mr-2 whitespace-nowrap font-['Liberation_Mono','Noto_Sans_CJK_SC'] text-[10px] leading-3">日志|平, 量1357.0747.0747 Feature-Win.2016.0 Server-3 Linux [D:/Linux_3] [/Work/WorkBook1150.cpt]</span>
          <svg width="46" height="9" viewBox="0 0 46 9" fill="none" stroke="#444" strokeWidth="1.500"><circle cx="7" cy="-2" r="4" /><path d="M10 1L13 4M26 1H36M29 3H33" /></svg>
          <button className="flex h-[9px] w-[107px] items-start justify-center bg-[#bde0fa]"><span className="-mt-[10px] leading-3">帆软 Admin</span></button>
        </header>
        <div className="flex min-h-0 flex-1">
          <Editor />
          <SideBar />
          <PropertyPanel />
        </div>
      </div>
      <div className="w-[22px] shrink-0 overflow-hidden pt-[52px] font-['Noto_Sans_CJK_SC'] text-white"><span className="-ml-px block leading-4">前</span></div>
    </div>
  );
}
